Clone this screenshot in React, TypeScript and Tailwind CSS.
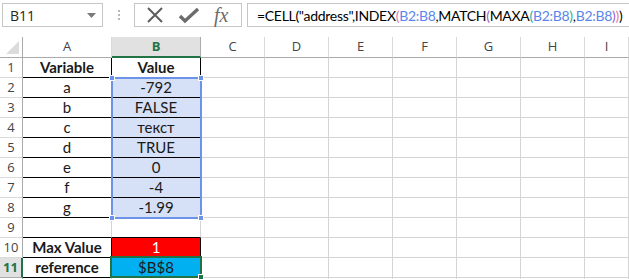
import React from "react";

const COLS = ["A", "B", "C", "D", "E", "F", "G", "H", "I"];

type CellSpec = { text?: string; bold?: boolean; bg?: string; color?: string };

const DATA: Record<string, CellSpec> = {
  A1: { text: "Variable", bold: true },
  B1: { text: "Value", bold: true },
  A2: { text: "a" }, B2: { text: "-792" },
  A3: { text: "b" }, B3: { text: "FALSE" },
  A4: { text: "c" }, B4: { text: "текст" },
  A5: { text: "d" }, B5: { text: "TRUE" },
  A6: { text: "e" }, B6: { text: "0" },
  A7: { text: "f" }, B7: { text: "-4" },
  A8: { text: "g" }, B8: { text: "-1.99" },
  A10: { text: "Max Value", bold: true },
  B10: { text: "1", bg: "red", color: "white" },
  A11: { text: "reference", bold: true },
  B11: { text: "$B$8", bg: "cyan" },
};

function isTable(r: number, c: string) {
  return (c === "A" || c === "B") && ((r >= 1 && r <= 8) || r === 10 || r === 11);
}

function Cell({ r, c }: { r: number; c: string }) {
  const key = `${c}${r}`;
  const d = DATA[key] ?? {};
  const table = isTable(r, c);
  // bottom of row 9 in A/B is the top edge of the lower table
  const blackBottom = table || ((c === "A" || c === "B") && r === 9);
  const selected = c === "B" && r >= 2 && r <= 8;
  let bg = "bg-white";
  if (selected) bg = "bg-[#d6e0f6]";
  if (d.bg === "red") bg = "bg-[#ff0000]";
  if (d.bg === "cyan") bg = "bg-[#00b0f0]";
  return (
    <div
      className={[
        "h-[20px] flex items-center justify-center border-r border-b overflow-hidden whitespace-nowrap text-[15px] leading-none",
        bg,
        table ? "border-r-black" : "border-r-[#d4d4d4]",
        blackBottom ? "border-b-black" : "border-b-[#d4d4d4]",
        d.bold ? "font-bold" : "",
        d.color === "white" ? "text-white" : "text-[#1a1a1a]",
      ].join(" ")}
      style={{ fontFamily: "Lato, 'Open Sans', sans-serif" }}
    >
      {d.text}
    </div>
  );
}

function Formula() {
  const blue = "text-[#5b86ea]";
  return (
    <span
      className="text-[14px] tracking-[-0.3px] text-black"
      style={{ fontFamily: "Lato, 'Open Sans', sans-serif" }}
    >
      =CELL("address",INDEX<span className="text-[#e17aa9]">(</span>
      <span className={blue}>B2:B8</span>,MATCH<span className="text-[#9b5fc4]">(</span>MAXA
      <span className="text-[#23b39b]">(</span>
      <span className={blue}>B2:B8</span>
      <span className="text-[#23b39b]">)</span>,<span className={blue}>B2:B8</span>
      <span className="text-[#9b5fc4]">)</span>
      <span className="text-[#e17aa9]">)</span>)
    </span>
  );
}

function TopBar() {
  const ui = { fontFamily: "'Open Sans', 'Noto Sans', sans-serif" };
  return (
    <div className="h-[37px] flex items-start pt-[3px] pl-[2px]">
      {/* name box */}
      <div
        className="w-[101px] h-[24px] border border-[#c6c6c6] flex items-center justify-between pl-[7px] pr-[6px] text-[14px] text-[#262626]"
        style={ui}
      >
        <span>B11</span>
        <svg width="9" height="5" viewBox="0 0 9 5">
          <path d="M0 0 H9 L4.5 5 Z" fill="#7a7a7a" />
        </svg>
      </div>
      <div className="w-[31px] h-[24px] flex flex-col items-center justify-center gap-[2px]">
        <div className="w-[2px] h-[2px] bg-[#b8b8b8]" />
        <div className="w-[2px] h-[2px] bg-[#b8b8b8]" />
        <div className="w-[2px] h-[2px] bg-[#b8b8b8]" />
      </div>
      {/* cancel / enter / fx */}
      <div className="w-[108px] h-[24px] border border-[#c6c6c6] flex items-center pl-[11px]">
        <svg width="18" height="18" viewBox="0 0 18 18">
          <path d="M2 2 L16 16 M16 2 L2 16" stroke="#5e5e5e" strokeWidth="2" />
        </svg>
        <svg width="22" height="18" viewBox="0 0 22 18" className="ml-[14px]">
          <path d="M2 10 L7 15 L20 3" stroke="#6b6b6b" strokeWidth="3.4" fill="none" />
        </svg>
        <span
          className="ml-[14px] text-[20px] italic text-[#6b6b6b] leading-none"
          style={{ fontFamily: "'Liberation Serif', 'DejaVu Serif', serif" }}
        >
          fx
        </span>
      </div>
      <div className="ml-[5px] flex-1 h-[24px] border border-[#c6c6c6] border-r-0 flex items-center pl-[9px] whitespace-nowrap overflow-hidden">
        <Formula />
      </div>
    </div>
  );
}

export default function App() {
  const hdr = { fontFamily: "'Open Sans', 'Noto Sans', sans-serif" };
  const rows = Array.from({ length: 12 }, (_, i) => i + 1);
  return (
    <div className="w-[629px] h-[279px] bg-white overflow-hidden">
      <TopBar />
      <div className="relative grid grid-cols-[23px_89px_89px_64px_64px_64px_64px_64px_64px_1fr]">
        {/* corner */}
        <div className="h-[21px] border-r border-b border-[#ababab] bg-white flex items-end justify-end pr-[3px] pb-[3px]">
          <svg width="13" height="13" viewBox="0 0 13 13">
            <path d="M13 0 V13 H0 Z" fill="#dcdcdc" />
          </svg>
        </div>
        {COLS.map((c) => (
          <div
            key={c}
            className={
              c === "B"
                ? "h-[21px] bg-[#e1e1e1] border-r border-[#ababab] border-b-2 border-b-[#217346] flex items-center justify-center text-[13px] font-bold text-[#217346]"
                : "h-[21px] bg-white border-r border-[#dadada] border-b border-b-[#ababab] flex items-center justify-center text-[13px] text-[#444]"
            }
            style={hdr}
          >
            {c}
          </div>
        ))}
        {rows.map((r) => (
          <React.Fragment key={r}>
            <div
              className={
                r === 11
                  ? "h-[20px] bg-[#e1e1e1] border-r-2 border-r-[#217346] border-b border-b-[#ababab] flex items-center justify-center text-[13px] font-bold text-[#217346]"
                  : "h-[20px] bg-white border-r border-[#ababab] border-b border-b-[#dadada] flex items-center justify-center text-[13px] text-[#444]"
              }
              style={hdr}
            >
              {r < 12 ? r : null}
            </div>
            {COLS.map((c) => (
              <Cell key={c} r={r} c={c} />
            ))}
          </React.Fragment>
        ))}

        {/* selection B2:B8 */}
        <div className="absolute left-[111px] top-[40px] w-[91px] h-[142px] border-2 border-[#6b93e8] pointer-events-none">
          <div className="absolute -left-[4px] -top-[4px] w-[6px] h-[6px] bg-[#6b93e8] border border-white" />
          <div className="absolute -right-[4px] -top-[4px] w-[6px] h-[6px] bg-[#6b93e8] border border-white" />
          <div className="absolute -left-[4px] -bottom-[4px] w-[6px] h-[6px] bg-[#6b93e8] border border-white" />
          <div className="absolute -right-[4px] -bottom-[4px] w-[6px] h-[6px] bg-[#6b93e8] border border-white" />
        </div>

        {/* active cell B11 */}
        <div className="absolute left-[110px] top-[219px] w-[92px] h-[22px] border-2 border-[#217346] pointer-events-none">
          <div className="absolute -right-[4px] -bottom-[4px] w-[6px] h-[6px] bg-[#217346] border border-white" />
        </div>
      </div>
    </div>
  );
}
